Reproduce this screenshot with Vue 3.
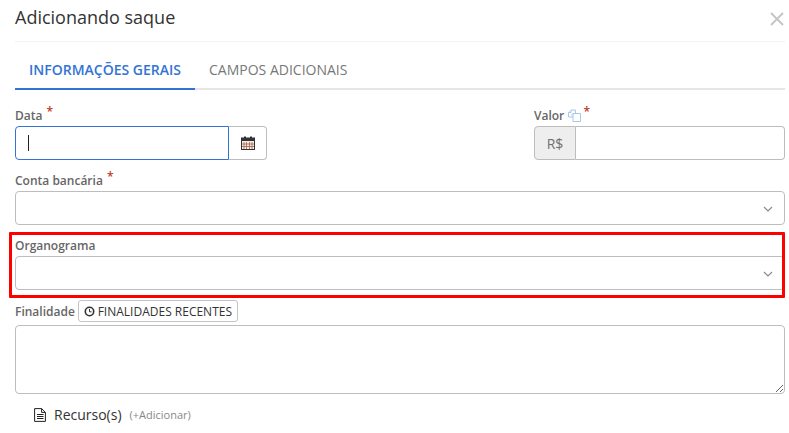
<script setup>
const tabs = [
  { label: 'INFORMAÇÕES GERAIS', active: true },
  { label: 'CAMPOS ADICIONAIS', active: false },
]
</script>

<template>
  <div class="page">
    <header class="head">
      <h1 class="title">Adicionando saque</h1>
      <svg class="close" width="14" height="14" viewBox="0 0 14 14"><path d="M1 1l12 12M13 1L1 13" stroke="#c4c4c4" stroke-width="1.8" fill="none" /></svg>
    </header>

    <nav class="tabs">
      <a v-for="t in tabs" :key="t.label" class="tab" :class="{ active: t.active }">{{ t.label }}</a>
    </nav>

    <div class="row-top">
      <div>
        <label class="label">Data <span class="req">*</span></label>
        <div class="group">
          <div class="input focus"><span class="caret"></span></div>
          <span class="addon cal">
            <svg width="14" height="14" viewBox="0 0 14 14">
              <rect x="0.5" y="2" width="13" height="11.5" fill="#f6eee8" stroke="#333" />
              <rect x="0.5" y="2" width="13" height="3" fill="#333" />
              <path d="M3 6v7M5.5 6v7M8.5 6v7M11 6v7M1 8h12M1 10.5h12" stroke="#a8604a" stroke-width="0.8" />
              <rect x="3" y="0.5" width="2" height="3" fill="#333" />
              <rect x="9" y="0.5" width="2" height="3" fill="#333" />
            </svg>
          </span>
        </div>
      </div>
      <div>
        <label class="label">Valor
          <svg class="copy" width="13" height="13" viewBox="0 0 13 13" fill="#fff" stroke="#a9c6ef">
            <path d="M.5 3.5L3 1h4.5v7H.5z" />
            <path d="M5 4.5h7.5v8H5z" />
            <path d="M3 1v2.5H.5M5 4.5L3.5 6.5" />
          </svg>
          <span class="req">*</span></label>
        <div class="group">
          <span class="addon rs">R$</span>
          <div class="input rest"></div>
        </div>
      </div>
    </div>

    <div class="field f-conta">
      <label class="label">Conta bancária <span class="req">*</span></label>
      <div class="select">
        <svg class="chev" width="10" height="6" viewBox="0 0 10 6"><path d="M1 1l4 4 4-4" stroke="#8a8a8a" stroke-width="1.2" fill="none" /></svg>
      </div>
    </div>

    <div class="field f-org">
      <label class="label">Organograma</label>
      <div class="select">
        <svg class="chev" width="10" height="6" viewBox="0 0 10 6"><path d="M1 1l4 4 4-4" stroke="#8a8a8a" stroke-width="1.2" fill="none" /></svg>
      </div>
      <div class="mark"></div>
    </div>

    <div class="final-head">
      <label class="label nomargin">Finalidade</label>
      <button class="recent">
        <svg width="11" height="11" viewBox="0 0 11 11" fill="none" stroke="#333"><circle cx="5.5" cy="5.5" r="4.2" stroke-width="1.6" /><path d="M5.5 3V5.8H7.6" stroke-width="1" /></svg>
        FINALIDADES RECENTES
      </button>
    </div>
    <textarea class="area"></textarea>

    <div class="res">
      <svg width="12" height="14" viewBox="0 0 12 14" fill="none" stroke="#222"><path d="M.6.6h7L11.4 4.4v9H.6zM7.6.6v3.8h3.8" /><path d="M3 6.5h6.5M3 8.5h6.5M3 10.5h6.5" /></svg>
      <span class="res-t">Recurso(s)</span>
      <span class="res-a">(+Adicionar)</span>
    </div>
  </div>
</template>

<style scoped>
.page {
  width: 789px;
  height: 433px;
  box-sizing: border-box;
  padding: 0 4px 0 15px;
  background: #fff;
  font-family: "Open Sans", sans-serif;
  overflow: hidden;
  color: #333;
}
.head {
  height: 41px;
  display: flex;
  align-items: center;
  justify-content: space-between;
  border-bottom: 1px solid #f2f2f2;
}
.title {
  margin: 0 0 7px;
  font-size: 18px;
  font-weight: 400;
  line-height: 24px;
  color: #333;
}
.close { margin: 0 1px 3px 0; }
.tabs {
  display: flex;
  height: 45px;
  margin-top: 1px;
  border-bottom: 2px solid #e6e6e6;
}
.tab {
  padding: 0 14px;
  font-size: 14px;
  line-height: 54px;
  height: 45px;
  color: #777;
  white-space: nowrap;
}
.tab.active {
  color: #3373d6;
  font-weight: 600;
  border-bottom: 2px solid #3373d6;
  margin-bottom: -2px;
}
.row-top {
  display: grid;
  grid-template-columns: 252px 251px;
  justify-content: space-between;
  margin-top: 15px;
}
.label {
  display: block;
  height: 21px;
  font-size: 12px;
  font-weight: 600;
  line-height: 21px;
  color: #666;
  white-space: nowrap;
}
.nomargin { height: auto; }
.req {
  color: #c0392b;
  font-size: 12px;
  position: relative;
  top: -4px;
  margin-left: 1px;
}
.copy { vertical-align: -2px; margin: 0 1px 0 1px; }
.group { display: flex; height: 34px; }
.input {
  box-sizing: border-box;
  border: 1px solid #bdbdbd;
  height: 34px;
  display: flex;
  align-items: center;
}
.focus {
  width: 214px;
  border-color: #3373d6;
  border-radius: 4px 0 0 4px;
  padding-left: 12px;
}
.caret { width: 1px; height: 16px; background: #222; }
.rest { flex: 1; border-left: 0; border-radius: 0 4px 4px 0; }
.addon {
  box-sizing: border-box;
  display: flex;
  align-items: center;
  justify-content: center;
  border: 1px solid #bdbdbd;
}
.cal { width: 38px; border-left: 0; border-radius: 0 4px 4px 0; }
.rs {
  width: 42px;
  background: #eeeeee;
  border-radius: 4px 0 0 4px;
  font-size: 14px;
  font-weight: 400;
  color: #6f6f6f;
}
.field { position: relative; }
.f-conta { margin-top: 10px; }
.f-org { margin-top: 10px; }
.select {
  box-sizing: border-box;
  height: 34px;
  border: 1px solid #bdbdbd;
  border-radius: 4px;
  display: flex;
  align-items: center;
  justify-content: flex-end;
  padding: 1px 11px 0 0;
}
.chev { display: block; }
.mark {
  position: absolute;
  left: -6px;
  right: 0;
  top: -3px;
  bottom: -8px;
  box-sizing: border-box;
  border: 3px solid #f00;
  border-radius: 1px;
  pointer-events: none;
}
.final-head {
  display: flex;
  align-items: center;
  gap: 3px;
  margin-top: 10px;
  height: 22px;
}
.recent {
  box-sizing: border-box;
  height: 22px;
  width: 160px;
  padding: 0;
  background: #fff;
  border: 1px solid #c4c4c4;
  border-radius: 3px;
  font-family: inherit;
  font-size: 12px;
  color: #333;
  display: flex;
  align-items: center;
  justify-content: center;
  gap: 3px;
}
.area {
  display: block;
  box-sizing: border-box;
  width: 100%;
  height: 69px;
  margin: 3px 0 0;
  border: 1px solid #bdbdbd;
  border-radius: 4px;
  outline: none;
}
.res {
  display: flex;
  align-items: center;
  margin: 13px 0 0 19px;
  height: 15px;
}
.res-t { font-size: 14px; color: #333; margin-left: 8px; }
.res-a { font-size: 11px; color: #888; margin-left: 8px; }
</style>

<style>
html, body { background: #fff; }
</style>
